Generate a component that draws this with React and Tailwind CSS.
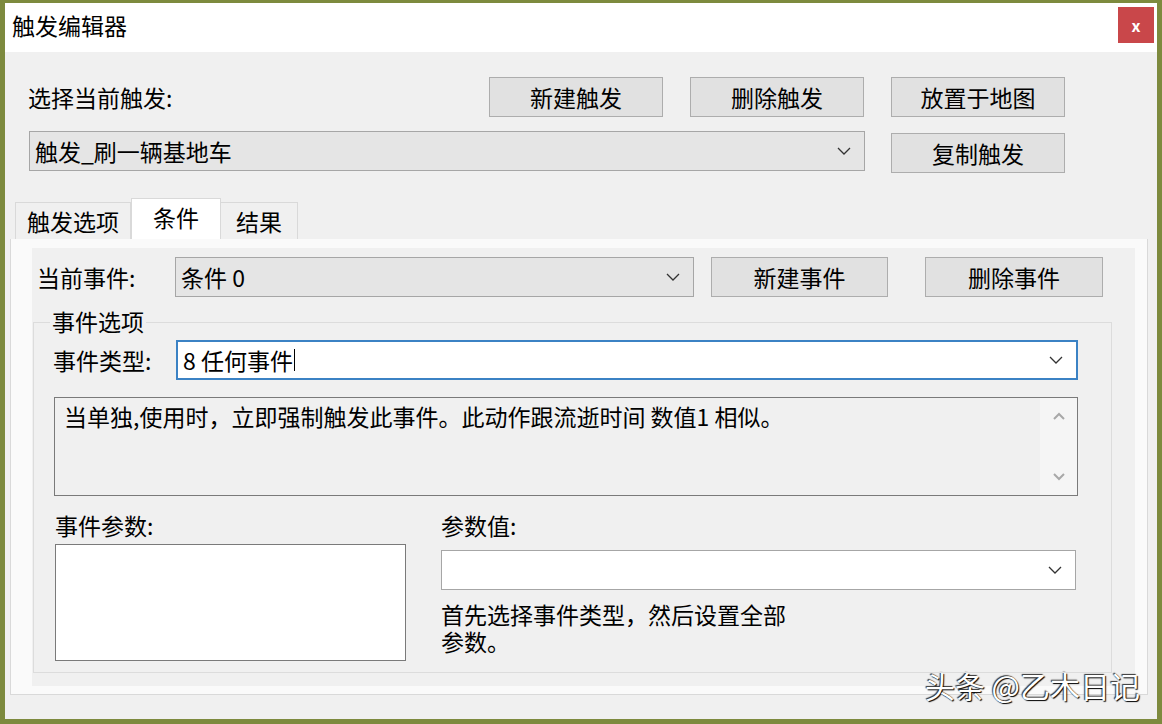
const font = { fontFamily: '"Noto Sans CJK SC", "Noto Sans", sans-serif' };

function Chevron({ className = "" }) {
  return (
    <svg width="16" height="10" viewBox="0 0 16 10" className={className}>
      <polyline points="2,2 8,8 14,2" fill="none" stroke="#333" strokeWidth="1.3" />
    </svg>
  );
}

function Button({ children, className = "" }) {
  return (
    <div
      className={`flex items-center justify-center h-[40px] bg-[#e1e1e1] border border-[#adadad] text-[23px] text-black ${className}`}
    >
      {children}
    </div>
  );
}

function Combo({ value, className = "", white = false, focused = false, caret = false }) {
  return (
    <div
      className={`flex items-center justify-between h-[40px] pl-[5px] pr-[12px] text-[23px] text-black ${
        white ? "bg-white" : "bg-[#e5e5e5]"
      } ${focused ? "border-2 border-[#3b82c4]" : "border border-[#a6a6a6]"} ${className}`}
    >
      <span className="flex items-center">
        {value}
        {caret && <span className="inline-block w-[1px] h-[22px] bg-black ml-[1px]" />}
      </span>
      <Chevron />
    </div>
  );
}

export default function App() {
  return (
    <div className="w-[1162px] h-[724px] bg-[#7d8a3e] pt-[3px] pl-[5px] overflow-hidden" style={font}>
      <div className="w-[1152px] h-[716px] bg-[#f0f0f0] flex flex-col">
        {/* title bar */}
        <div className="h-[49px] bg-white flex justify-between items-start">
          <div className="text-[23px] text-black pl-[7px] pt-[5px]">触发编辑器</div>
          <div className="w-[36px] h-[36px] mt-[4px] mr-[3px] bg-[#c9474a] flex items-center justify-center text-white font-bold text-[16px]">
            x
          </div>
        </div>

        <div className="pl-[23px] pt-[25px]">
          <div className="flex items-center">
            <div className="w-[461px] text-[23px] text-black">选择当前触发:</div>
            <Button className="w-[174px]">新建触发</Button>
            <Button className="w-[174px] ml-[27px]">删除触发</Button>
            <Button className="w-[174px] ml-[27px]">放置于地图</Button>
          </div>
          <div className="flex items-start mt-[14px]">
            <Combo value="触发_刷一辆基地车" className="w-[836px] ml-[1px]" />
            <Button className="w-[174px] ml-[26px] mt-[2px]">复制触发</Button>
          </div>
        </div>

        {/* tabs */}
        <div className="flex items-end pl-[10px] mt-[25px] h-[41px]">
          <div className="w-[116px] h-[37px] bg-[#f0f0f0] border border-[#d9d9d9] border-b-0 flex items-center justify-center text-[23px] text-black">
            触发选项
          </div>
          <div className="w-[90px] h-[41px] bg-white border border-[#d9d9d9] border-b-0 flex items-center justify-center text-[23px] text-black pb-[4px]">
            条件
          </div>
          <div className="w-[77px] h-[37px] bg-[#f0f0f0] border border-[#d9d9d9] border-b-0 border-l-0 flex items-center justify-center text-[23px] text-black">
            结果
          </div>
        </div>

        {/* tab panel */}
        <div className="ml-[5px] w-[1138px] h-[456px] bg-[#fafafa] border border-[#d9d9d9] border-t-0 pl-[21px] pt-[9px]">
          <div className="w-[1103px] h-[438px] bg-[#f0f0f0] pt-[9px]">
            <div className="flex items-center">
              <div className="w-[143px] pl-[5px] text-[23px] text-black">当前事件:</div>
              <Combo value="条件 0" className="w-[519px]" />
              <Button className="w-[177px] ml-[17px]">新建事件</Button>
              <Button className="w-[178px] ml-[37px]">删除事件</Button>
            </div>

            {/* group box */}
            <div className="relative mt-[25px] ml-[1px] w-[1079px] h-[351px] border border-[#dcdcdc] pl-[19px] pt-[17px]">
              <div className="absolute left-[16px] top-[-18px] px-[2px] bg-[#f0f0f0] text-[23px] text-black leading-[32px]">
                事件选项
              </div>
              <div className="flex items-center">
                <div className="w-[123px] text-[23px] text-black">事件类型:</div>
                <Combo value="8 任何事件" white focused caret className="w-[902px]" />
              </div>

              <div className="mt-[17px] ml-[1px] w-[1024px] h-[99px] border border-[#7a7a7a] bg-[#f0f0f0] flex">
                <div className="flex-1 px-[9px] pt-[3px] text-[23px] text-black leading-[30px]">
                  当单独,使用时，立即强制触发此事件。此动作跟流逝时间 数值1 相似。
                </div>
                <div className="w-[37px] bg-[#f5f5f5] flex flex-col items-center justify-between py-[14px]">
                  <svg width="14" height="9" viewBox="0 0 14 9">
                    <polyline points="2,7 7,2 12,7" fill="none" stroke="#a8a8a8" strokeWidth="2" />
                  </svg>
                  <svg width="14" height="9" viewBox="0 0 14 9">
                    <polyline points="2,2 7,7 12,2" fill="none" stroke="#a8a8a8" strokeWidth="2" />
                  </svg>
                </div>
              </div>

              <div className="flex mt-[13px]">
                <div className="w-[388px] pl-[2px]">
                  <div className="text-[23px] text-black leading-[32px]">事件参数:</div>
                  <div className="mt-[3px] w-[351px] h-[117px] bg-white border border-[#7a7a7a]" />
                </div>
                <div>
                  <div className="text-[23px] text-black leading-[32px]">参数值:</div>
                  <Combo value="" white className="w-[635px] mt-[9px]" />
                  <div className="mt-[11px] text-[23px] text-black leading-[27px]">
                    <div>首先选择事件类型，然后设置全部</div>
                    <div>参数。</div>
                  </div>
                </div>
              </div>
            </div>
          </div>
        </div>

        <div className="flex justify-end pr-[17px] -mt-[27px]">
          <div
            className="text-[30px] text-white leading-[34px]"
            style={{ textShadow: "1px 1px 1px #000, -1px -1px 1px #333" }}
          >
            头条 @乙木日记
          </div>
        </div>
      </div>
    </div>
  );
}
